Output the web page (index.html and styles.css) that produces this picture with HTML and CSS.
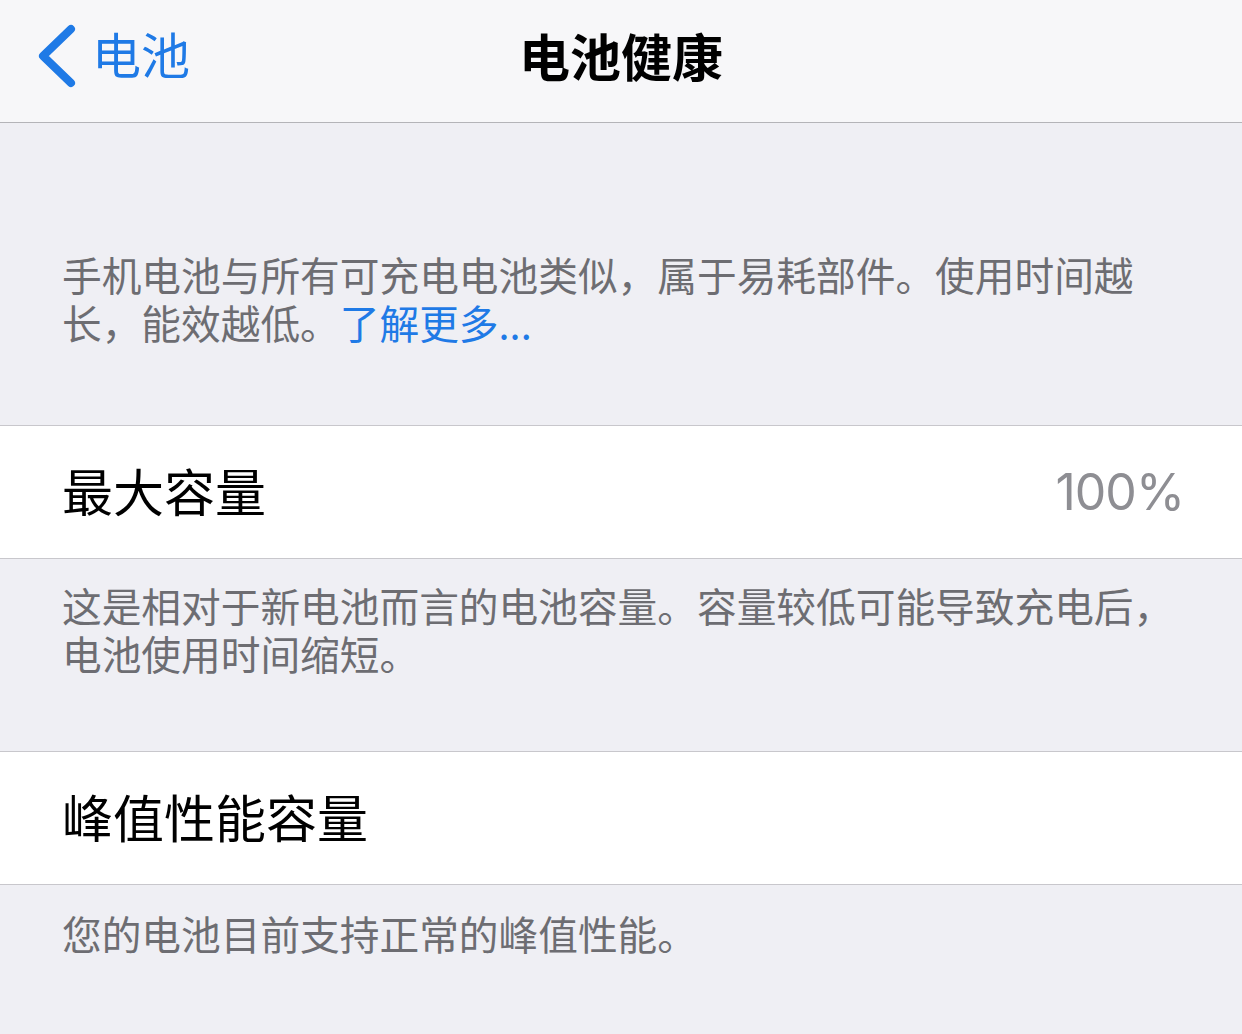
FILE: index.html
```html
<!DOCTYPE html>
<html lang="zh-CN">
<head>
<meta charset="utf-8">
<title>电池健康</title>
<link rel="stylesheet" href="styles.css">
</head>
<body>
<div class="page">
  <header class="nav">
    <div class="back">
      <svg class="chev" width="42" height="66" viewBox="0 0 42 66">
        <polyline points="34,7 6,34 34,61" fill="none" stroke="#1f7ae6" stroke-width="8" stroke-linecap="round" stroke-linejoin="round"/>
      </svg>
      <span class="back-label">电池</span>
    </div>
    <div class="title">电池健康</div>
  </header>

  <section class="note note-intro">
    <p>手机电池与所有可充电电池类似，属于易耗部件。使用时间越<br>长，能效越低。<span class="link">了解更多...</span></p>
  </section>

  <div class="row">
    <span class="row-label">最大容量</span>
    <span class="row-value">100%</span>
  </div>

  <section class="note note-mid">
    <p>这是相对于新电池而言的电池容量。容量较低可能导致充电后，<br>电池使用时间缩短。</p>
  </section>

  <div class="row">
    <span class="row-label">峰值性能容量</span>
  </div>

  <section class="note note-last">
    <p>您的电池目前支持正常的峰值性能。</p>
  </section>
</div>
</body>
</html>
```

FILE: styles.css
```css
* { box-sizing: border-box; }
html, body {
  margin: 0;
  padding: 0;
  background: #efeff4;
}
body {
  font-family: "Noto Sans CJK SC", "Noto Sans", sans-serif;
  width: 1242px;
  height: 1034px;
  overflow: hidden;
}
.nav {
  position: relative;
  height: 123px;
  background: #f7f7f9;
  border-bottom: 1px solid #b4b4b8;
  display: flex;
  align-items: center;
  justify-content: center;
}
.back {
  position: absolute;
  left: 37px;
  top: 22px;
  display: flex;
  align-items: center;
  gap: 13px;
  color: #1f7ae6;
}
.chev { display: block; }
.back-label {
  font-size: 49px;
  line-height: 66px;
  margin-top: -4px;
}
.title {
  font-size: 51px;
  font-weight: 700;
  color: #000;
  line-height: 66px;
  margin-top: -12px;
}
.note {
  padding-left: 62px;
  padding-right: 30px;
  color: #6d6d72;
  font-size: 39.7px;
}
.note p {
  margin: 0;
  line-height: 47.5px;
}
.note-intro {
  padding-top: 127px;
  padding-bottom: 80px;
  border-bottom: 1px solid #c8c7cc;
}
.note-mid {
  padding-top: 22px;
  padding-bottom: 75px;
  border-bottom: 1px solid #c8c7cc;
}
.note-last {
  padding-top: 24px;
}
.link { color: #1f7ae6; }
.row {
  height: 133px;
  background: #fff;
  border-bottom: 1px solid #c8c7cc;
  display: flex;
  align-items: center;
  justify-content: space-between;
  padding: 0 58px 0 62px;
}
.row-label {
  font-size: 51px;
  color: #000;
  line-height: 1;
  margin-top: -4px;
}
.row-value {
  font-family: "Inter", "Open Sans", sans-serif;
  font-size: 50px;
  color: #8e8e93;
  line-height: 1;
  letter-spacing: -1px;
}
```
